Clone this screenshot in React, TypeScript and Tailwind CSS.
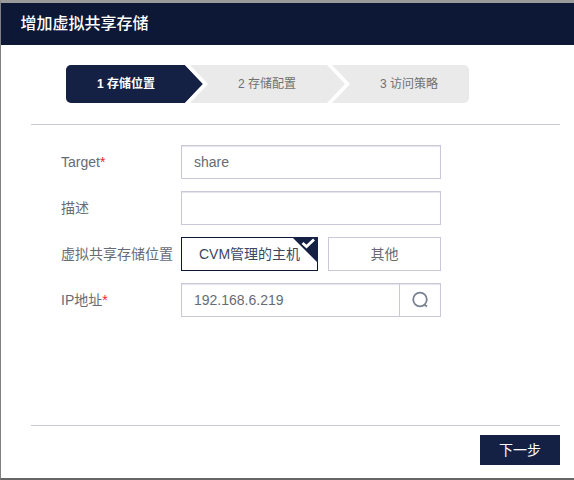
import React from 'react';

const font = { cjk: "font-['Liberation_Sans','Noto_Sans_CJK_SC',sans-serif]" };

function Chevron({ fill }: { fill?: string }) {
  return (
    <svg className="w-[23px] h-[38px] shrink-0" viewBox="0 0 23 38">
      {fill && <polygon points="0,0 18,19 0,38" fill={fill} />}
      <polygon points="0,0 5,0 23,19 5,38 0,38 18,19" fill="#ffffff" />
    </svg>
  );
}

function Row({ label, required, children }: { label: string; required?: boolean; children: React.ReactNode }) {
  return (
    <div className="flex items-center h-[34px]">
      <div className="w-[120px] shrink-0 text-[14px] text-[#666b76]">
        {label}
        {required && <span className="text-[#f5222d]">*</span>}
      </div>
      {children}
    </div>
  );
}

export default function App() {
  return (
    <div className={`relative w-[574px] h-[480px] flex flex-col bg-white border-t-[3px] border-t-[#9a9a9a] border-l border-l-[#808080] border-b-2 border-b-[#666666] overflow-hidden ${font.cjk}`}>
      <div className="absolute left-[-1px] top-[95px] w-px h-[33px] bg-[#0c1836]" />
      <header className="h-[42px] shrink-0 bg-[#0c1836] pl-[19.5px] flex items-center text-[16px] font-medium text-white">
        增加虚拟共享存储
      </header>

      <div className="mt-[20px] ml-[65px] w-[403px] h-[38px] flex rounded-[5px] overflow-hidden bg-[#eaeaea] text-[12px] text-[#707070] shrink-0">
        <div className="w-[119px] shrink-0 bg-[#142144] text-white font-bold flex items-center pl-[31px]">1 存储位置</div>
        <Chevron fill="#142144" />
        <div className="w-[119px] shrink-0 flex items-center pl-[30px]">2 存储配置</div>
        <Chevron />
        <div className="flex-1 flex items-center pl-[30px]">3 访问策略</div>
      </div>

      <div className="mt-[21px] ml-[30px] w-[529px] h-px bg-[#c9c9d9] shrink-0" />

      <div className="mt-[20px] ml-[60px] flex flex-col gap-[12px]">
        <Row label="Target" required>
          <input
            readOnly
            value="share"
            className="w-[260px] h-[34px] border border-[#c9c9d9] shadow-[inset_0_1px_1px_#e4e4ee] px-[12px] text-[14px] text-[#666b76] outline-none"
          />
        </Row>
        <Row label="描述">
          <input readOnly className="w-[260px] h-[34px] border border-[#c9c9d9] shadow-[inset_0_1px_1px_#e4e4ee] px-[12px] text-[14px] outline-none" />
        </Row>
        <Row label="虚拟共享存储位置">
          <div className="flex gap-[10px]">
            <div className="relative w-[137px] h-[34px] border border-[#0c1836] flex items-center justify-center text-[14px] text-[#3c4663]">
              CVM管理的主机
              <svg className="absolute right-[-1px] top-[-1px] w-[26px] h-[26px]" viewBox="0 0 26 26">
                <polygon points="0,0 26,0 26,26" fill="#142144" />
                <path d="M10.5 6 L14.5 9.5 L22 2.5" fill="none" stroke="#ffffff" strokeWidth="2.8" />
              </svg>
            </div>
            <div className="w-[113px] h-[34px] border border-[#c9c9d9] flex items-center justify-center text-[14px] text-[#666b76]">
              其他
            </div>
          </div>
        </Row>
        <Row label="IP地址" required>
          <div className="w-[260px] h-[34px] border border-[#c9c9d9] shadow-[inset_0_1px_1px_#e4e4ee] flex">
            <div className="flex-1 flex items-center pl-[12px] text-[14px] text-[#666b76]">192.168.6.219</div>
            <div className="w-[41px] border-l border-[#c9c9d9] flex items-center justify-center">
              <svg className="w-[18px] h-[18px]" viewBox="0 0 18 18">
                <circle cx="9" cy="8.5" r="6.8" fill="none" stroke="#7a8190" strokeWidth="1.8" />
                <path d="M13 13.5 L16 15.5" fill="none" stroke="#7a8190" strokeWidth="2" />
              </svg>
            </div>
          </div>
        </Row>
      </div>

      <div className="mt-auto ml-[30px] w-[529px] border-t border-[#c9c9d9] pt-[9px] pb-[13px] flex justify-end shrink-0">
        <button className="w-[80px] h-[30px] bg-[#142144] text-white text-[14px]">下一步</button>
      </div>
    </div>
  );
}
